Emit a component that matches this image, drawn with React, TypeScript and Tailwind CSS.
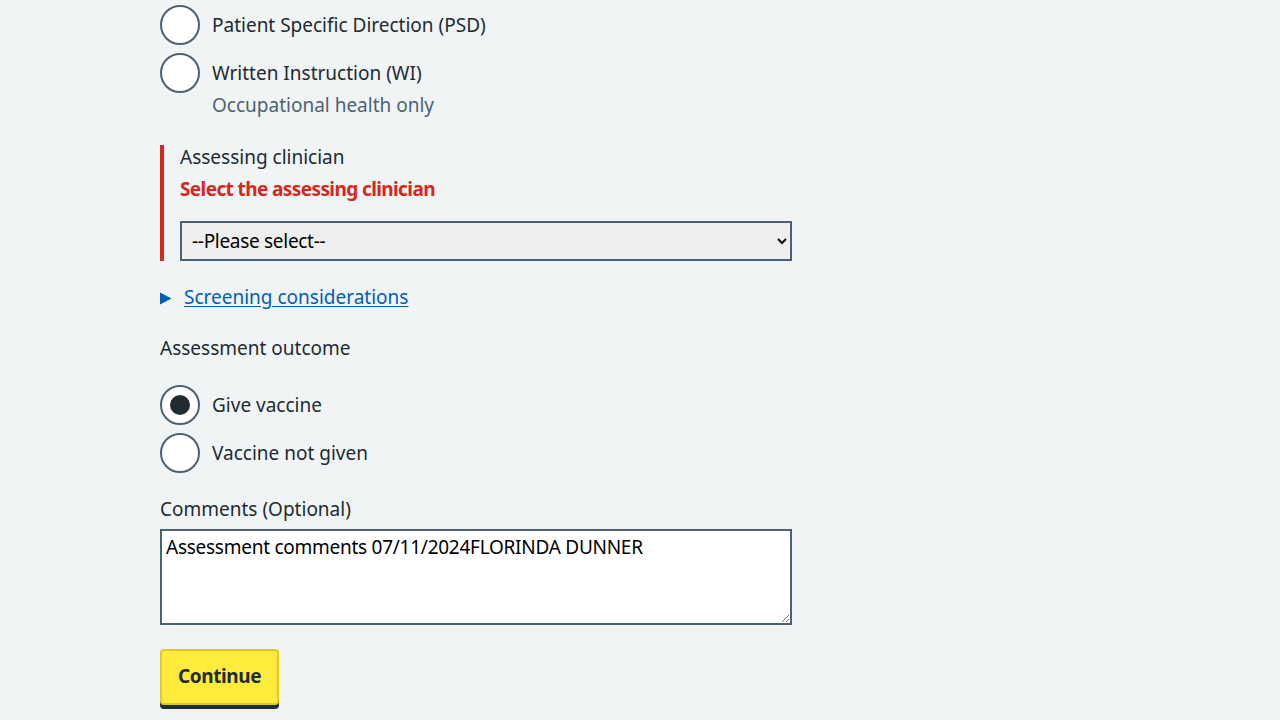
import { useState } from "react";

const font = "font-['Noto_Sans',_'Liberation_Sans',_sans-serif]";

function Radio({
  label,
  checked,
  onSelect,
  className = "",
}: {
  label: string;
  checked: boolean;
  onSelect: () => void;
  className?: string;
}) {
  return (
    <div className={`flex h-10 items-center ${className}`} onClick={onSelect}>
      <span className="flex h-10 w-10 shrink-0 items-center justify-center rounded-full border-2 border-[#4c6272] bg-white">
        {checked ? <span className="h-5 w-5 rounded-full bg-[#212b32]" /> : null}
      </span>
      <span className="ml-3 text-[19px] leading-6 text-[#212b32]">{label}</span>
    </div>
  );
}

export default function App() {
  const [direction, setDirection] = useState<string | null>(null);
  const [outcome, setOutcome] = useState("give");
  const [comments, setComments] = useState("Assessment comments 07/11/2024FLORINDA DUNNER");

  return (
    <div className={`min-h-[720px] bg-[#f0f4f5] ${font}`}>
      <div className="mx-auto w-[960px] pt-[5px]">
        <div className="w-[632px]">
          <Radio
            label="Patient Specific Direction (PSD)"
            checked={direction === "psd"}
            onSelect={() => setDirection("psd")}
          />
          <Radio
            label="Written Instruction (WI)"
            checked={direction === "wi"}
            onSelect={() => setDirection("wi")}
            className="mt-2"
          />
          <div className="pl-[52px] text-[19px] leading-6 text-[#4c6272]">Occupational health only</div>

          <div className="mt-7 border-l-4 border-[#d5281b] pl-4">
            <div className="text-[19px] leading-6 text-[#212b32]">Assessing clinician</div>
            <div className="mt-2 text-[19px] font-bold leading-6 tracking-[-0.6px] text-[#d5281b]">
              Select the assessing clinician
            </div>
            <select
              className={`mt-5 block h-10 w-full border-2 border-[#4c6272] bg-[#efefef] pl-[6px] text-[19px] tracking-[-0.3px] text-black ${font}`}
              defaultValue=""
            >
              <option value="">--Please select--</option>
            </select>
          </div>

          <div className="mt-6 flex h-6 items-center">
            <svg width="12" height="14" viewBox="0 0 12 14" className="mt-1 shrink-0">
              <polygon points="0,0.5 11.5,6.5 0,12.5" fill="#005eb8" />
            </svg>
            <a href="#" className="ml-3 text-[19px] leading-6 text-[#005eb8] underline underline-offset-2">
              Screening considerations
            </a>
          </div>

          <div className="mt-[27px] text-[19px] leading-6 text-[#212b32]">Assessment outcome</div>
          <Radio
            label="Give vaccine"
            checked={outcome === "give"}
            onSelect={() => setOutcome("give")}
            className="mt-[25px]"
          />
          <Radio
            label="Vaccine not given"
            checked={outcome === "not"}
            onSelect={() => setOutcome("not")}
            className="mt-2"
          />

          <div className="mt-6 text-[19px] leading-6 text-[#212b32]">Comments (Optional)</div>
          <textarea
            value={comments}
            onChange={(e) => setComments(e.target.value)}
            className={`mt-[8px] block h-[96px] w-full border-2 border-[#4c6272] bg-white px-1 py-[4px] text-[19px] leading-6 tracking-[-0.26px] text-black ${font}`}
          />

          <button className="mt-6 flex h-14 items-center rounded border-2 border-[#dcc92a] bg-[#ffeb3b] px-4 pb-0.5 text-[19px] font-bold tracking-[-0.4px] text-[#212b32] shadow-[0_4px_0_#212b32]">
            Continue
          </button>
        </div>
      </div>
    </div>
  );
}
